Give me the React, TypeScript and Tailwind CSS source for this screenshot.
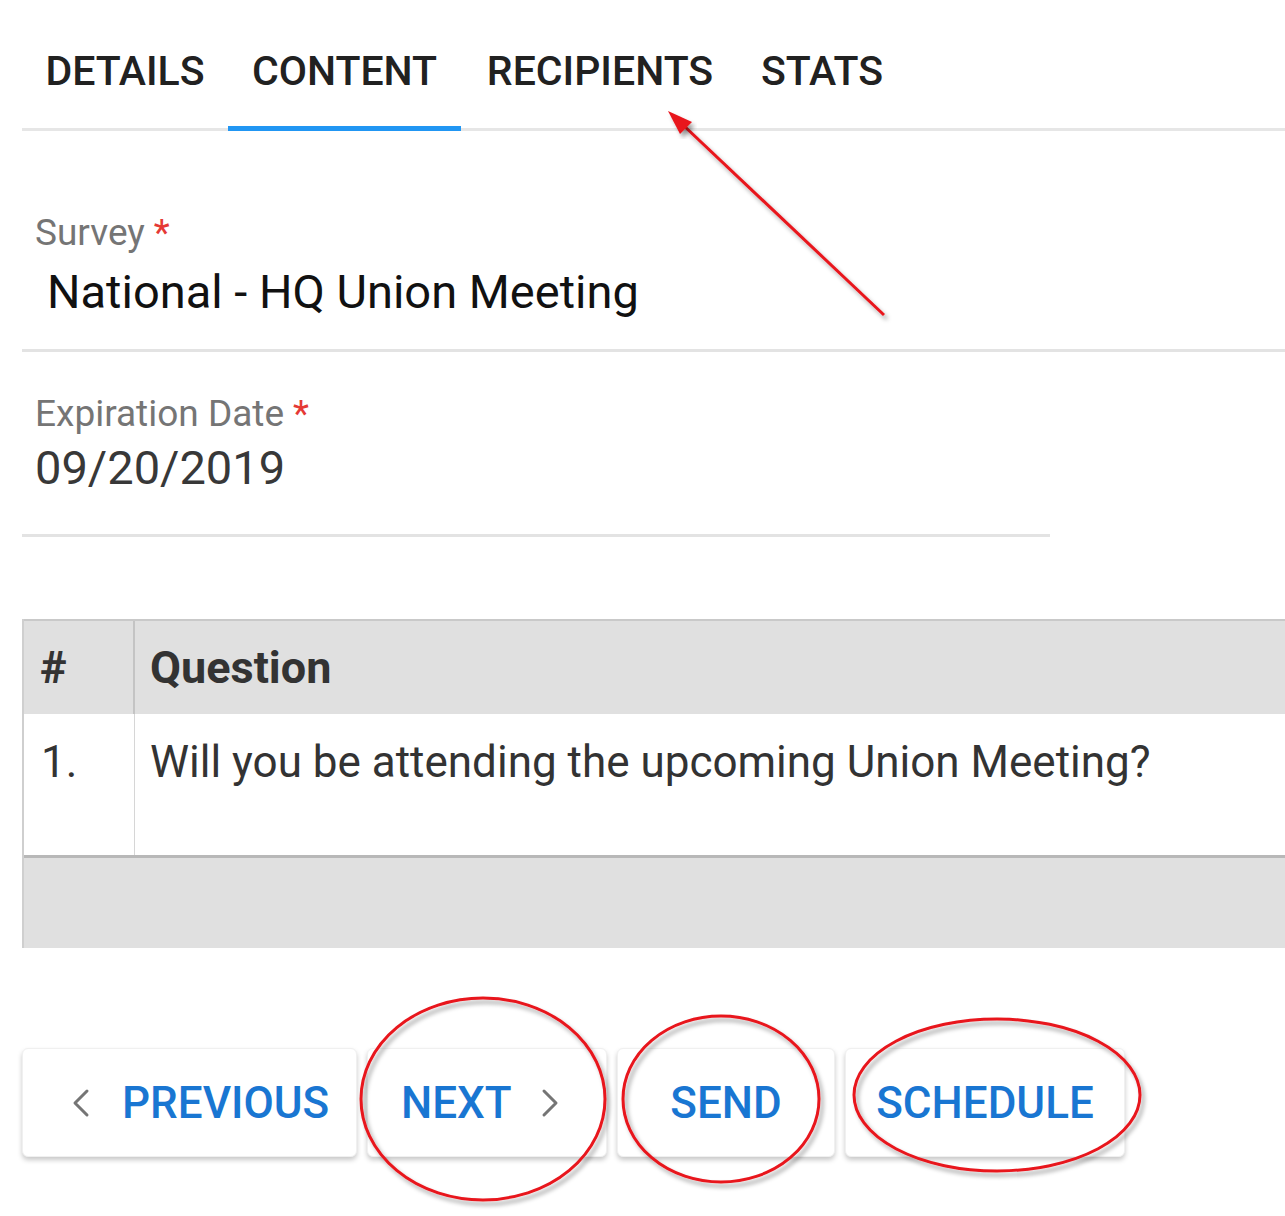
import { ReactNode } from "react";

type Tab = { label: string; width: string; active?: boolean };

const tabs: Tab[] = [
  { label: "DETAILS", width: "w-[206px]" },
  { label: "CONTENT", width: "w-[233px]", active: true },
  { label: "RECIPIENTS", width: "w-[278px]" },
  { label: "STATS", width: "w-[166px]" },
];

function Chevron({ dir }: { dir: "left" | "right" }) {
  return (
    <svg width="20" height="30" viewBox="0 0 20 30" fill="none" className="shrink-0">
      <path
        d={dir === "left" ? "M16 3 L4 15 L16 27" : "M4 3 L16 15 L4 27"}
        stroke="#757575"
        strokeWidth="3"
        strokeLinecap="round"
        strokeLinejoin="round"
      />
    </svg>
  );
}

function NavButton({ className, children }: { className: string; children: ReactNode }) {
  return (
    <button
      className={`${className} h-[109px] flex items-center bg-white rounded-[6px] border border-[#f0f0f0] shadow-[0_3px_5px_rgba(0,0,0,0.22)] text-[#1976d2] text-[44px] font-medium uppercase`}
    >
      {children}
    </button>
  );
}

function Field({ label, value, valueClass, lineWidth }: { label: string; value: string; valueClass: string; lineWidth: string }) {
  return (
    <div className={`${lineWidth} border-b-[3px] border-[#e3e3e3]`}>
      <div className="pl-[13px] text-[37px] text-[#757575] leading-[43px]">
        {label}
        <span className="text-[#e53935] ml-[9px]">*</span>
      </div>
      <div className={valueClass}>{value}</div>
    </div>
  );
}

export default function App() {
  return (
    <div className="relative w-[1285px] h-[1216px] bg-white overflow-hidden font-['Roboto','Liberation_Sans',sans-serif]">
      <div className="pl-[22px] pt-[20px]">
        {/* tabs */}
        <div className="flex border-b-[3px] border-[#e6e6e6]">
          {tabs.map((t) => (
            <div
              key={t.label}
              className={`relative ${t.width} h-[108px] pb-[4px] flex items-center justify-center text-[41px] font-medium text-[#212121]`}
            >
              {t.label}
              {t.active && <div className="absolute left-0 right-0 -bottom-[3px] h-[5px] bg-[#2196f3]" />}
            </div>
          ))}
        </div>

        {/* survey */}
        <div className="pt-[80px]">
          <Field
            label="Survey"
            value="National - HQ Union Meeting"
            valueClass="pl-[25px] pt-[10px] pb-[30px] text-[47px] leading-[55px] text-[#111]"
            lineWidth="w-full"
          />
        </div>

        {/* expiration */}
        <div className="pt-[40px]">
          <Field
            label="Expiration Date"
            value="09/20/2019"
            valueClass="pl-[13px] pt-[5px] pb-[39px] text-[47px] leading-[55px] text-[#383838]"
            lineWidth="w-[1028px]"
          />
        </div>

        {/* questions table */}
        <div className="mt-[82px] w-[1263px] border-l-2 border-[#cfcfcf] text-[#333]">
          <div className="flex h-[95px] bg-[#e0e0e0] border-t-2 border-[#c9c9c9] items-center text-[45px] font-bold">
            <div className="w-[111px] h-full flex items-center pl-[16px] border-r-2 border-[#c4c4c4]">#</div>
            <div className="pl-[15px]">Question</div>
          </div>
          <div className="flex h-[141px] bg-white text-[44px]">
            <div className="w-[111px] pl-[17px] pt-[15px] border-r border-[#d6d6d6]">1.</div>
            <div className="pl-[15px] pt-[15px]">Will you be attending the upcoming Union Meeting?</div>
          </div>
          <div className="h-[93px] bg-[#e0e0e0] border-t-[3px] border-[#b8b8b8]" />
        </div>

        {/* buttons */}
        <div className="mt-[100px] flex gap-[10px]">
          <NavButton className="w-[335px] pl-[48px]">
            <span className="flex items-center gap-[31px]">
              <Chevron dir="left" />
              Previous
            </span>
          </NavButton>
          <NavButton className="w-[240px] pl-[33px]">
            <span className="flex items-center gap-[28px]">
              Next
              <Chevron dir="right" />
            </span>
          </NavButton>
          <NavButton className="w-[218px] justify-center">Send</NavButton>
          <NavButton className="w-[280px] justify-center">Schedule</NavButton>
        </div>
      </div>

      {/* red annotations */}
      <svg className="absolute inset-0 pointer-events-none" width="1285" height="1216" viewBox="0 0 1285 1216">
        <defs>
          <filter id="sh" x="-20%" y="-20%" width="140%" height="140%">
            <feDropShadow dx="3" dy="4" stdDeviation="2" floodColor="#000" floodOpacity="0.35" />
          </filter>
        </defs>
        <g filter="url(#sh)" fill="none" stroke="#e8141c" strokeWidth="3">
          <line x1="884" y1="315" x2="682" y2="124" />
          <ellipse cx="483" cy="1099" rx="122" ry="101" />
          <ellipse cx="721" cy="1099" rx="98" ry="83" />
          <ellipse cx="997" cy="1095" rx="143" ry="76" />
        </g>
        <polygon points="668,111 692,122 680,134" fill="#e8141c" filter="url(#sh)" />
      </svg>
    </div>
  );
}
